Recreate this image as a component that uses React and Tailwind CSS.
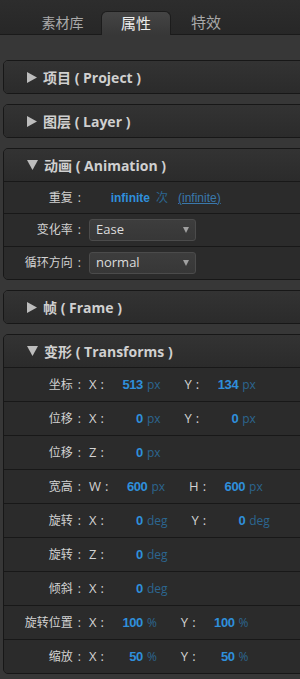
import React from "react";

const CJK = { fontFamily: '"Open Sans", "Noto Sans CJK SC", sans-serif' };
const NUM = { fontFamily: '"Liberation Sans", Arial, sans-serif' };

function TriRight() {
  return (
    <svg width="10" height="11" viewBox="0 0 10 11" className="shrink-0">
      <polygon points="0,0 10,5.5 0,11" fill="#bdbdbd" />
    </svg>
  );
}
function TriDown() {
  return (
    <svg width="11" height="10" viewBox="0 0 11 10" className="shrink-0">
      <polygon points="0,0 11,0 5.5,10" fill="#bdbdbd" />
    </svg>
  );
}

function Header({ open, zh, en }) {
  return (
    <div className="h-[32px] flex items-center pl-[23px] bg-gradient-to-b from-[#333333] to-[#2b2b2b] text-[#d0d0d0] font-bold text-[14px]">
      {open ? <TriDown /> : <TriRight />}
      <span className="ml-[6px] whitespace-pre">{zh} ( {en} )</span>
    </div>
  );
}

function Box({ children, className = "" }) {
  return (
    <div className={"ml-[3px] -mr-[8px] border border-[#171717] rounded-[5px] overflow-hidden bg-[#2b2b2b] " + className}>
      {children}
    </div>
  );
}

function Row({ label, children, h = "h-[34px]" }) {
  return (
    <div className={"flex items-center border-t border-[#181818] bg-[#2b2b2b] " + h}>
      <div className="w-[77px] shrink-0 text-right text-[12px] text-[#d2d2d2] whitespace-pre">
        {label}
        <span className="ml-[5px]">:</span>
      </div>
      <div className="ml-[8px] flex items-center text-[13px] text-[#d2d2d2]">{children}</div>
    </div>
  );
}

function Axis({ axis, value, unit, first }) {
  return (
    <>
      <span className={"whitespace-pre " + (first ? "" : "ml-[24px]")}>
        {axis}
        <span className="ml-[4px]">:</span>
      </span>
      <span style={NUM} className="w-[39px] text-right font-bold text-[13px] tracking-[-0.4px] text-[#2f8fdb]">{value}</span>
      <span className="ml-[4px] text-[12px] text-[#2c6690]">{unit}</span>
    </>
  );
}

function Select({ value }) {
  return (
    <div className="w-[107px] h-[22px] rounded-[3px] border border-[#4b4b4b] bg-gradient-to-b from-[#3d3d3d] to-[#373737] flex items-center justify-between pl-[6px] pr-[6px] text-[13px] text-[#dddddd]">
      <span>{value}</span>
      <svg width="6" height="6" viewBox="0 0 6 6">
        <polygon points="0,0 6,0 3,6" fill="#a0a0a0" />
      </svg>
    </div>
  );
}

export default function App() {
  return (
    <div style={CJK} className="w-[300px] min-h-[679px] bg-[#373737] overflow-hidden">
      {/* Tab bar */}
      <div className="h-[35px] bg-gradient-to-b from-[#2d2d2d] to-[#272727] border-b border-[#1a1a1a] flex items-end pl-[24px]">
        <div className="w-[77px] h-[24px] flex items-center justify-center text-[14px] text-[#a9a9a9]">素材库</div>
        <div className="w-[70px] h-[24px] -mb-px rounded-t-[6px] border border-b-0 border-[#1c1c1c] bg-gradient-to-b from-[#454545] to-[#373737] flex items-center justify-center text-[15px] text-[#ececec]">
          属性
        </div>
        <div className="w-[70px] h-[24px] flex items-center justify-center text-[15px] text-[#a9a9a9]">特效</div>
      </div>

      <div className="pt-[25px] flex flex-col gap-[10px]">
        <Box>
          <Header zh="项目" en="Project" />
        </Box>
        <Box>
          <Header zh="图层" en="Layer" />
        </Box>
        <Box>
          <Header open zh="动画" en="Animation" />
          <Row label="重复" h="h-[32px]">
            <span style={NUM} className="w-[61px] text-right font-bold text-[12px] text-[#2f8fdb]">infinite</span>
            <span className="ml-[6px] text-[12px] text-[#2c6690]">次</span>
            <span style={NUM} className="ml-[10px] text-[12px] text-[#3a78ab] underline">(infinite)</span>
          </Row>
          <Row label="变化率" h="h-[33px]">
            <Select value="Ease" />
          </Row>
          <Row label="循环方向" h="h-[33px]">
            <Select value="normal" />
          </Row>
        </Box>
        <Box>
          <Header zh="帧" en="Frame" />
        </Box>
        <Box>
          <Header open zh="变形" en="Transforms" />
          <Row label="坐标">
            <Axis first axis="X" value="513" unit="px" />
            <Axis axis="Y" value="134" unit="px" />
          </Row>
          <Row label="位移">
            <Axis first axis="X" value="0" unit="px" />
            <Axis axis="Y" value="0" unit="px" />
          </Row>
          <Row label="位移">
            <Axis first axis="Z" value="0" unit="px" />
          </Row>
          <Row label="宽高">
            <Axis first axis="W" value="600" unit="px" />
            <Axis axis="H" value="600" unit="px" />
          </Row>
          <Row label="旋转">
            <Axis first axis="X" value="0" unit="deg" />
            <Axis axis="Y" value="0" unit="deg" />
          </Row>
          <Row label="旋转">
            <Axis first axis="Z" value="0" unit="deg" />
          </Row>
          <Row label="倾斜">
            <Axis first axis="X" value="0" unit="deg" />
          </Row>
          <Row label="旋转位置">
            <Axis first axis="X" value="100" unit="%" />
            <Axis axis="Y" value="100" unit="%" />
          </Row>
          <Row label="缩放">
            <Axis first axis="X" value="50" unit="%" />
            <Axis axis="Y" value="50" unit="%" />
          </Row>
        </Box>
      </div>
    </div>
  );
}
